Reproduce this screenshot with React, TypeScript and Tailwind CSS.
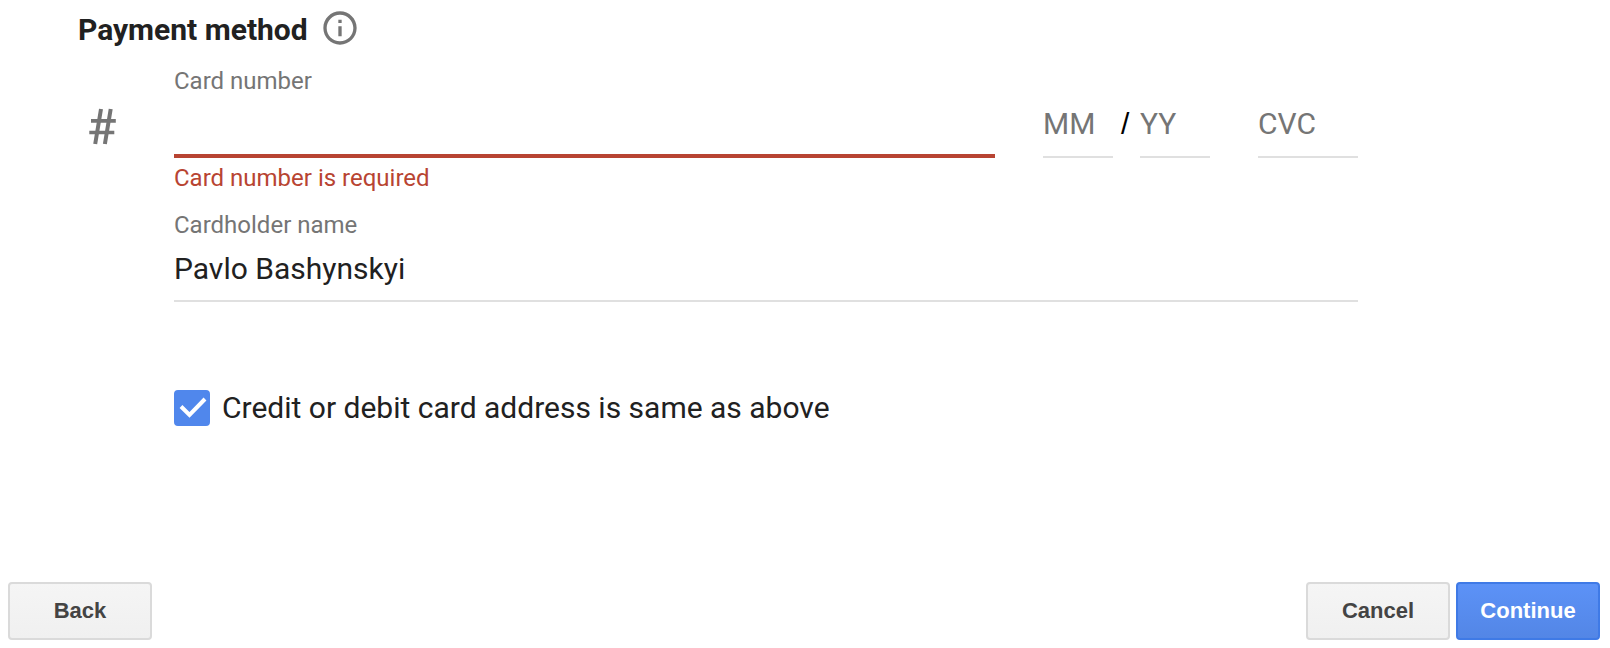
import React, { useState } from "react";

function InfoIcon() {
  return (
    <svg viewBox="0 0 24 24" className="size-10" fill="#757575" aria-hidden="true">
      <path d="M11 17h2v-6h-2v6zm1-15C6.480 2 2 6.480 2 12s4.480 10 10 10 10-4.480 10-10S17.520 2 12 2zm0 18c-4.410 0-8-3.590-8-8s3.590-8 8-8 8 3.590 8 8-3.590 8-8 8zM11 9h2V7h-2v2z" />
    </svg>
  );
}

function NumberIcon() {
  return (
    <svg viewBox="0 0 48 48" className="size-12" fill="none" stroke="#757575" aria-hidden="true">
      <path strokeWidth="4" d="M23 7L17.200 42M32.700 7L26.900 42" />
      <path strokeWidth="3.600" d="M13 18.900H37.800M11.300 30.500H36.300" />
    </svg>
  );
}

type ShortFieldProps = { id: string; label: string; className: string };

function ShortField({ id, label, className }: ShortFieldProps) {
  return (
    <input
      id={id}
      aria-label={label}
      placeholder={label}
      className={`h-14 border-b-2 border-[#e0e0e0] pb-3 text-[30px] leading-9 text-[#212121] outline-none placeholder:text-[#757575] ${className}`}
    />
  );
}

const buttonBase =
  "h-[58px] w-36 rounded-[4px] border-2 font-['Liberation_Sans',Arial,sans-serif] text-[22px] leading-6 font-bold";
const plainButton = "border-[#dadada] bg-linear-to-b from-[#f5f5f5] to-[#f0f0f0] text-[#444444]";
const primaryButton = "border-[#3f7ae6] bg-linear-to-b from-[#5c92f7] to-[#5386e6] text-white";

export default function App() {
  const [cardNumber, setCardNumber] = useState("");
  const [holder, setHolder] = useState("Pavlo Bashynskyi");
  const [sameAddress, setSameAddress] = useState(true);

  return (
    <form
      className="flex min-h-screen flex-col bg-white font-[Roboto,sans-serif] text-[#212121]"
      onSubmit={(event) => event.preventDefault()}
    >
      <main className="flex-1 pt-2 pr-[252px] pl-[78px]">
        <header className="flex h-10 items-center gap-3">
          <h1 className="pt-1 text-[30px] leading-10 font-bold">Payment method</h1>
          <button type="button" aria-label="About payment methods">
            <InfoIcon />
          </button>
        </header>

        <div className="mt-4 flex">
          <div className="w-24 shrink-0 pt-[38px]">
            <NumberIcon />
          </div>
          <div className="min-w-0 flex-1">
            <div className="flex">
              <div className="min-w-0 flex-1">
                <label htmlFor="card-number" className="block pt-px text-[24px] leading-8 text-[#757575]">
                  Card number
                </label>
                <input
                  id="card-number"
                  value={cardNumber}
                  onChange={(event) => setCardNumber(event.target.value)}
                  aria-invalid="true"
                  aria-describedby="card-number-error"
                  className="block h-[61px] w-full border-b-4 border-[#b84432] text-[30px] outline-none"
                />
                <p id="card-number-error" className="pt-1 text-[24px] leading-8 text-[#b84432]">
                  Card number is required
                </p>
              </div>
              <div className="ml-12 flex shrink-0 items-start pt-[38px]">
                <ShortField id="expiry-month" label="MM" className="w-[70px]" />
                <span className="w-[27px] pt-1 pl-2 font-['Liberation_Sans',Arial,sans-serif] text-[30px] leading-9 text-black">
                  /
                </span>
                <ShortField id="expiry-year" label="YY" className="w-[70px]" />
                <ShortField id="security-code" label="CVC" className="ml-12 w-[100px]" />
              </div>
            </div>

            <label htmlFor="holder" className="mt-[15px] block text-[24px] leading-8 text-[#757575]">
              Cardholder name
            </label>
            <input
              id="holder"
              value={holder}
              onChange={(event) => setHolder(event.target.value)}
              className="block h-[61px] w-full border-b-2 border-[#e0e0e0] pb-1 text-[30px] leading-9 outline-none"
            />

            <label className="mt-[88px] flex w-fit items-center gap-3 text-[30px] leading-9">
              <span className="grid size-9 grid-cols-1">
                <input
                  type="checkbox"
                  checked={sameAddress}
                  onChange={(event) => setSameAddress(event.target.checked)}
                  className="peer col-start-1 row-start-1 size-9 appearance-none rounded-[4px] border-2 border-[#757575] checked:border-[#5087ec] checked:bg-[#5087ec]"
                />
                <svg
                  viewBox="0 0 36 36"
                  className="pointer-events-none invisible col-start-1 row-start-1 size-9 peer-checked:visible"
                  fill="none"
                  stroke="white"
                  strokeWidth="4"
                  aria-hidden="true"
                >
                  <path d="M7 16.500L15.500 25L31 9" />
                </svg>
              </span>
              Credit or debit card address is same as above
            </label>
          </div>
        </div>
      </main>

      <footer className="flex justify-between pt-8 pr-2.5 pb-2 pl-2">
        <button type="button" className={`${buttonBase} ${plainButton}`}>Back</button>
        <div className="flex gap-1.5">
          <button type="button" className={`${buttonBase} ${plainButton}`}>Cancel</button>
          <button type="submit" className={`${buttonBase} ${primaryButton}`}>Continue</button>
        </div>
      </footer>
    </form>
  );
}
